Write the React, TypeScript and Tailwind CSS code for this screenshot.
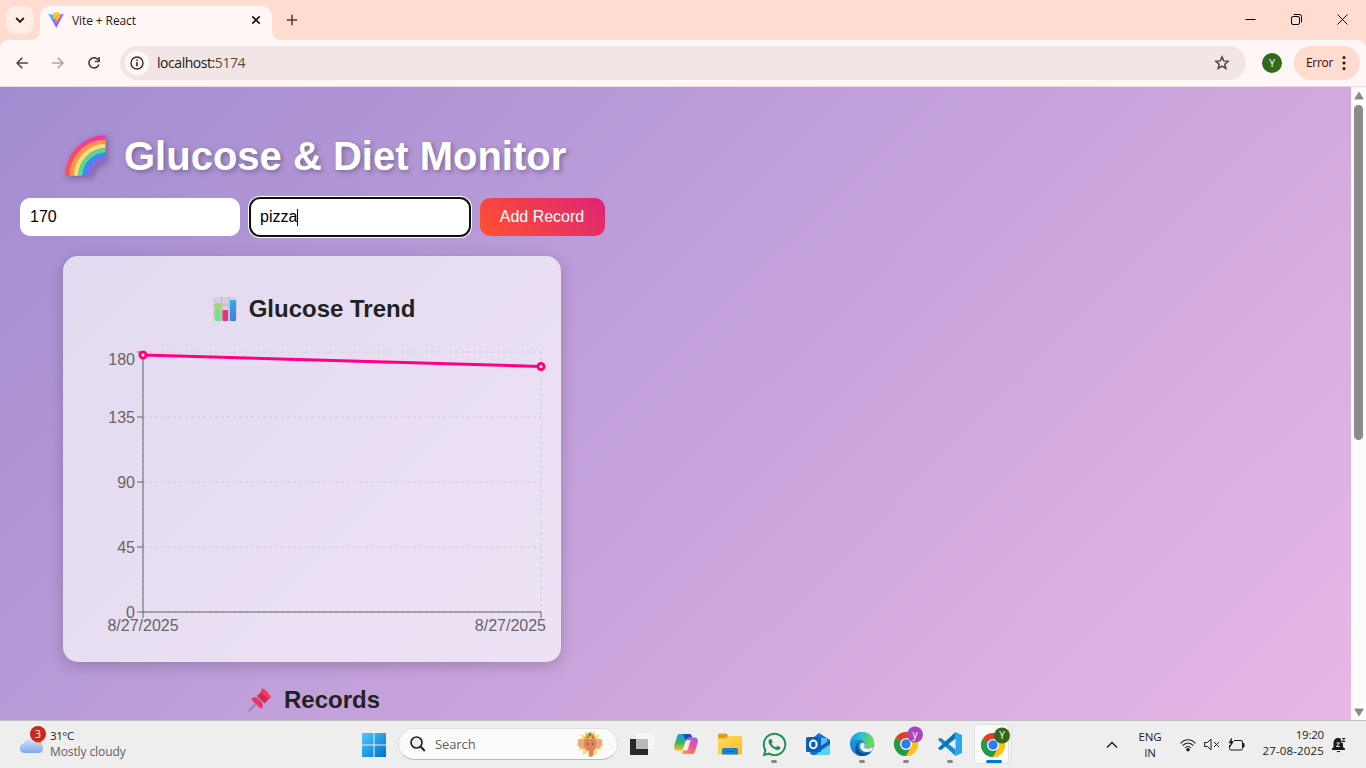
import React from 'react';
import { FaWhatsapp } from 'react-icons/fa';

function Vite() {
  return (
    <svg className="h-4 w-4 shrink-0" viewBox="0 0 16 16">
      <defs>
        <linearGradient id="va" x1="0" y1="0" x2=".6" y2="1">
          <stop stopColor="#41d1ff" /><stop offset="1" stopColor="#bd34fe" />
        </linearGradient>
        <linearGradient id="vb" x1="0" y1="0" x2="0" y2="1">
          <stop stopColor="#ffcf3a" /><stop offset="1" stopColor="#ffa800" />
        </linearGradient>
      </defs>
      <path d="M0 1.7 8 3l8-1.3L8.3 15.8z" fill="url(#va)" />
      <path d="M5.6.6 11.8 0 10.600 3.800l2.200-.4-5.500 8 .6-4.800-2.700.5z" fill="url(#vb)" />
    </svg>
  );
}

function TabStrip() {
  return (
    <div className="flex h-10 shrink-0 bg-[#ffdbd0]">
      <div className="ml-1.5 mt-1.5 flex h-7 w-7 items-center justify-center rounded-[10px] bg-[#ffede8]">
        <svg width="10" height="8" viewBox="0 0 10 8" fill="none" stroke="#2a1714" strokeWidth="1.9"><path d="m1.2 2 3.8 3.8L8.800 2" /></svg>
      </div>
      <div className="flex w-[6px] items-end">
        <svg className="-ml-[4px] w-[10px] shrink-0" height="10" viewBox="0 0 10 10"><path d="M10 0v10H0Q10 10 10 0" fill="#fff7f5" /></svg>
      </div>
      <div className="mt-1.5 flex w-[232px] items-center rounded-t-[10px] bg-[#fff7f5] pb-1.5 pl-2 pr-[11px]">
        <Vite />
        <span className="ml-2 grow whitespace-nowrap pt-px text-[12px] tracking-[-0.1px] text-[#231917]">Vite + React</span>
        <svg width="10" height="10" viewBox="0 0 10 10" stroke="#231917" strokeWidth="1.7"><path d="m1.300 1.300 7.400 7.400m0-7.400L1.300 8.700" /></svg>
      </div>
      <div className="flex w-[14px] items-end">
        <svg width="10" height="10" viewBox="0 0 10 10"><path d="M0 0v10h10Q0 10 0 0" fill="#fff7f5" /></svg>
      </div>
      <svg className="mt-[14px]" width="12" height="12" viewBox="0 0 12 12" stroke="#5d4037" strokeWidth="1.600"><path d="M6 .8v10.400M.8 6h10.400" /></svg>
      <div className="ml-auto flex items-start gap-[35px] pr-[18px] pt-[14px]">
        <svg width="11" height="11" viewBox="0 0 11 11" stroke="#000"><path d="M.5 5.500h10" /></svg>
        <svg width="11" height="11" viewBox="0 0 11 11" fill="none" stroke="#000"><rect x=".5" y="2.500" width="8" height="8" rx="1.500" /><path d="M2.700.5H8.500a2 2 0 0 1 2 2v5.800" /></svg>
        <svg width="11" height="11" viewBox="0 0 11 11" stroke="#000"><path d="m.5.5 10 10m0-10-10 10" /></svg>
      </div>
    </div>
  );
}

function Toolbar() {
  return (
    <div className="h-[47px] shrink-0 bg-[#ffdbd0]">
      <div className="flex h-[47px] items-start rounded-t-[8px] border-b border-[#f0dcd6] bg-[#fff7f5] pt-1.5">
        <div className="flex h-[34px] w-[120px] items-center pl-4">
          <svg width="12" height="12" viewBox="0 0 12 12" fill="none" stroke="#5d4037" strokeWidth="1.600"><path d="M12 6H1.200M6.300.8 1.100 6l5.200 5.200" /></svg>
          <svg className="ml-6" width="12" height="12" viewBox="0 0 12 12" fill="none" stroke="#b3a4a0" strokeWidth="1.600"><path d="M0 6h10.800M5.700.8 10.900 6l-5.200 5.200" /></svg>
          <svg className="ml-6" width="12" height="12" viewBox="0 0 12 12" fill="none" stroke="#5d4037" strokeWidth="1.700"><path d="M10.900 7.500A5.100 5.100 0 1 1 10 2.600l1 1.300" /><path d="M11.100 0v4.500H6.600" /></svg>
        </div>
        <div className="flex h-[34px] w-[1126px] items-center rounded-full bg-[#f1e6e5] pl-[5px] pr-[16px]">
          <div className="flex h-6 w-6 items-center justify-center rounded-full bg-[#fff7f5]">
            <svg width="14" height="14" viewBox="0 0 14 14" fill="none" stroke="#3b2d2a" strokeWidth="1.400"><circle cx="7" cy="7" r="6" /><path d="M7 6v4.300M7 3.500V5" strokeWidth="1.600" /></svg>
          </div>
          <span className="ml-[8px] grow pb-px text-[14px] tracking-[-0.450px] text-[#231917]">localhost:<span className="text-[#5b4a46]">5174</span></span>
          <svg width="16" height="16" viewBox="0 0 16 16" fill="none" stroke="#53433f" strokeWidth="1.500"><path d="m8 1.900 1.700 4 4.400.4-3.300 2.900 1 4.300L8 11.200l-3.800 2.300 1-4.300L1.900 6.300l4.400-.4z" /></svg>
        </div>
        <div className="ml-4 mt-[7px] flex h-5 w-5 items-center justify-center rounded-full bg-[#33691e] text-[11px] text-white">Y</div>
        <div className="ml-3 flex h-[34px] w-[66px] items-center rounded-full bg-[#ffdbd0] pl-3 text-[12px] text-[#3b0900]">
          <span className="w-[36px] tracking-[-0.300px]">Error</span>
          <svg width="4" height="16" viewBox="0 0 4 16" fill="#3b0900"><circle cx="2" cy="2.500" r="1.500" /><circle cx="2" cy="8" r="1.500" /><circle cx="2" cy="13.500" r="1.500" /></svg>
        </div>
      </div>
    </div>
  );
}

function Rainbow() {
  const bands = ['#f8387f', '#ff9545', '#ffdc75', '#55d896', '#3b8bf7', '#8f68dc'];
  return (
    <svg className="h-[42px] w-[42px] drop-shadow-[2px_2px_3px_rgba(0,0,0,0.3)]" viewBox="0 0 42 42">
      <defs>
        <linearGradient id="ra" x1="0" y1="1" x2="1" y2="0"><stop stopColor="#ff5252" /><stop offset="1" stopColor="#f72fb0" /></linearGradient>
      </defs>
      {bands.map((c, i) => (
        <path key={c} fill="none" stroke={i === 0 ? 'url(#ra)' : c} strokeWidth="4.500" d={`M${2.500 + i * 4.3} 40.800C${2.500 + i * 4.3} ${19.500 + i * 2.6} ${19.500 + i * 2.6} ${2.500 + i * 4.3} 40.500 ${2.500 + i * 4.3}`} />
      ))}
    </svg>
  );
}

function ChartEmoji() {
  return (
    <svg width="24" height="24" viewBox="0 0 24 24">
      <defs>
        <linearGradient id="cg" x1="0" y1="0" x2="0" y2="1"><stop stopColor="#a5dc55" /><stop offset="1" stopColor="#5be88e" /></linearGradient>
        <linearGradient id="cb" x1="0" y1="0" x2="0" y2="1"><stop stopColor="#35a9f5" /><stop offset="1" stopColor="#3f7fd0" /></linearGradient>
      </defs>
      <rect width="24" height="24" rx="3" fill="#d4cfdb" />
      <path d="M8.500 0v24M16 0v24M0 8h24M0 16h24" stroke="#bbb6c3" strokeWidth="1" />
      <rect x="2" y="6" width="5.500" height="18" rx="1" fill="url(#cg)" />
      <rect x="9.500" y="13" width="5.500" height="11" rx="1" fill="#e5337a" />
      <rect x="17" y="3" width="6" height="21" rx="1" fill="url(#cb)" />
    </svg>
  );
}

function Pin() {
  return (
    <svg width="24" height="24" viewBox="0 0 24 24">
      <path d="M1 23 9.500 14" stroke="#8d8792" strokeWidth="1.800" />
      <path d="m9 8 5-5 7.500 7.500-5 5z" fill="#c92c55" />
      <path d="M14 .7c1.500-1.200 9.500 6.800 8.700 9-.8 1.500-2.700 1.300-3.700.5L14 5c-1-1.200-1.200-3 0-4.300" fill="#fb3560" />
      <path d="M3.500 10.500c2-1.800 5-1.700 7.500.7l1.700 1.800c2.200 2.200 2.700 5 1.500 6.700-1.500 1.800-3.200-.5-5.200-2.700-1.800-2-6-4.500-5.500-6.500" fill="#f0326c" />
    </svg>
  );
}

function TrendChart() {
  const ticks: [string, number][] = [['180', 352], ['135', 417], ['90', 482], ['45', 547], ['0', 612]];
  return (
    <svg className="block h-[300px] w-[498px] font-['Liberation_Sans',sans-serif] text-[16px]" viewBox="63 345 498 300">
      <g stroke="#ccc" strokeDasharray="3 3">
        {ticks.map(([t, y]) => <path key={t} d={`M143 ${y}H541`} />)}
        <path d="M143 352v260M541 352v260" />
      </g>
      <g stroke="#666">
        <path d="M143 352v260M143 612h398M143 612v6M541 612v6" />
        {ticks.map(([t, y]) => <path key={t} d={`M137 ${y}h6`} />)}
      </g>
      <g fill="#666">
        {ticks.map(([t, y]) => <text key={t} x="135" y={t === '180' ? 365 : y + 6} textAnchor="end">{t}</text>)}
        <text x="143" y="631" textAnchor="middle">8/27/2025</text>
        <text x="546" y="631" textAnchor="end">8/27/2025</text>
      </g>
      <path d="M143 355 541 366.500" stroke="#ff0080" strokeWidth="3" />
      <g fill="#fff" stroke="#ff0080" strokeWidth="3"><circle cx="143" cy="355" r="3" /><circle cx="541" cy="366.500" r="3" /></g>
    </svg>
  );
}

function Page() {
  return (
    <div className="h-full grow overflow-hidden">
      <div className="h-[1140px] bg-[linear-gradient(135deg,#a18cd1,#fbc2eb)] pl-5 pt-[44px] font-['Liberation_Sans',Arial,sans-serif] text-[#222]">
        <div className="flex h-[50px] items-center pl-[45px]">
          <Rainbow />
          <h1 className="ml-[17px] whitespace-nowrap text-[40px] font-bold leading-[50px] text-white [text-shadow:2px_2px_5px_rgba(0,0,0,0.300)]">Glucose &amp; Diet Monitor</h1>
        </div>
        <div className="mt-[17px] flex h-[38px] gap-[10px] text-[16px]">
          <div className="flex w-[220px] items-center rounded-[10px] bg-white px-[10px] text-black">170</div>
          <div className="flex w-[220px] items-center rounded-[10px] bg-white px-[10px] text-black outline-2 outline-[#101010] ring-2 ring-white outline-offset-[-1px]">pizza<span className="h-[17px] w-px bg-black" /></div>
          <button className="w-[125px] rounded-[10px] bg-[linear-gradient(45deg,#ff512f,#dd2476)] pr-px text-white">Add Record</button>
        </div>
        <div className="ml-[43px] mt-5 h-[406px] w-[498px] rounded-[15px] bg-white/67 pt-[39px] shadow-[0_4px_15px_rgba(0,0,0,0.200)]">
          <div className="flex h-7 items-center justify-center gap-[12px] pl-[4px] text-[24px] font-bold">
            <ChartEmoji /><h2>Glucose Trend</h2>
          </div>
          <div className="pt-[22px]"><TrendChart /></div>
        </div>
        <div className="mt-6 flex h-7 w-[588px] items-center justify-center gap-[12px] text-[24px] font-bold">
          <Pin /><h2>Records</h2>
        </div>
      </div>
    </div>
  );
}

function Scrollbar() {
  return (
    <div className="flex h-full w-[15px] shrink-0 flex-col items-center bg-[#fcfcfc] pt-[4px]">
      <svg width="10" height="9" viewBox="0 0 10 9" fill="#8b8b8b"><path d="M5 .5 9.500 7.500Q9.500 8.500 8.500 8.500h-7Q.5 8.500.5 7.500z" /></svg>
      <div className="mt-[5px] h-[335px] w-[9px] rounded-full bg-[#8b8b8b]" />
      <svg className="mb-[3px] mt-auto" width="10" height="9" viewBox="0 0 10 9" fill="#8b8b8b"><path d="M5 8.500.5 1.500Q.5.500 1.500.5h7q1 0 1 1z" /></svg>
    </div>
  );
}

function Chrome({ letter, color }: { letter: string; color: string }) {
  return (
    <svg className="block h-[30px] w-[30px]" viewBox="0 0 30 30">
      <circle cx="12" cy="18" r="12" fill="#fbc116" />
      <path d="M12 18 1.600 12A12 12 0 0 1 22.400 12z" fill="#e33b2e" />
      <path d="M12 18 1.600 12A12 12 0 0 0 12 30l5-9z" fill="#229a48" />
      <path d="M12 12h10.400A12 12 0 0 1 12 30l5.200-9z" fill="#fbc116" />
      <circle cx="12" cy="18" r="6" fill="#fff" /><circle cx="12" cy="18" r="4.700" fill="#2f7cf0" />
      <circle cx="21" cy="8.500" r="8" fill={color} />
      <text x="21" y="12" textAnchor="middle" fontSize="10" fill="#fff">{letter}</text>
    </svg>
  );
}

function Defs() {
  return (
    <defs>
      <linearGradient id="win" x1="0" y1="0" x2="1" y2="1"><stop stopColor="#4cc9fb" /><stop offset="1" stopColor="#0070d0" /></linearGradient>
      <linearGradient id="fold" x1="0" y1="0" x2="1" y2="1"><stop stopColor="#ffdc6a" /><stop offset="1" stopColor="#fbb91c" /></linearGradient>
      <linearGradient id="cp1" x1="0" y1="0" x2="0" y2="1"><stop stopColor="#179de5" /><stop offset=".5" stopColor="#2fb56d" /><stop offset="1" stopColor="#f5c513" /></linearGradient>
      <linearGradient id="cp2" x1=".7" y1="0" x2=".2" y2="1"><stop stopColor="#a85be8" /><stop offset=".5" stopColor="#f0568d" /><stop offset="1" stopColor="#ff9651" /></linearGradient>
      <linearGradient id="ed1" x1="0" y1="0" x2="1" y2=".3"><stop stopColor="#1589df" /><stop offset=".5" stopColor="#32c1cf" /><stop offset="1" stopColor="#6bdd4d" /></linearGradient>
      <linearGradient id="ed2" x1="0" y1="0" x2="1" y2="1"><stop stopColor="#1fa6e5" /><stop offset="1" stopColor="#0c61b8" /></linearGradient>
      <linearGradient id="cl" x1="0" y1="0" x2="0" y2="1"><stop stopColor="#d5e3fa" /><stop offset="1" stopColor="#83a9e8" /></linearGradient>
    </defs>
  );
}

function Ganesha() {
  return (
    <svg width="30" height="28" viewBox="0 0 30 28">
      <path d="m15 1 1.500 4L20 1l0 5 5-2-3 5 6 0-5 4 7 2-7 1 5 5-6-2 0 6-5-3-2 3-2-3-5 3 0-6-6 2 5-5-7-1 7-2-5-4h6L5 4l5 2V1l3.500 4z" fill="#f8dc6a" />
      <path d="M10 10C5 7 1.500 10 3 15c1 4 6 5 8 2zM20 10c5-3 8.500 0 7 5-1 4-6 5-8 2z" fill="#eba986" />
      <path d="M9.500 9h11c2 6 0 10-2 11.500v4c-.5 3.500-5 3-5 0l1-3c-4-1-7-5-5-12.500" fill="#dc8660" />
      <path d="M9 9.500c1-4 4-7 6-7.500s5 3.500 6 7.500c-4-2-8-2-12 0" fill="#dda947" />
      <path d="m15 3 1.500 2L15 6.500 13.500 5z" fill="#3d75c9" />
      <path d="M12 7.500h1.500M17 7.500h1.500" stroke="#c43535" strokeWidth="1.500" />
      <circle cx="12.500" cy="14" r=".7" fill="#53261a" /><circle cx="17.500" cy="14" r=".7" fill="#53261a" />
      <path d="M14.500 18h3M15 21h2.500" stroke="#c4704e" strokeWidth=".6" />
    </svg>
  );
}

function Slot({ children, dot }: { children: React.ReactNode; dot?: boolean }) {
  return (
    <div className="flex h-[47px] w-11 flex-col items-center pt-[4px]">
      <div className="flex h-[38px] items-center justify-center">{children}</div>
      {dot && <div className="-mt-[3px] h-[3px] w-1.5 rounded-full bg-[#868686]" />}
    </div>
  );
}

function Taskbar() {
  return (
    <div className="flex h-12 shrink-0 border-t border-[#c3bdc4] bg-[#eee] text-[12px] text-[#1b1b1b]">
      <div className="flex w-[351px] pl-[18px]">
        <svg className="mt-[4px]" width="30" height="30" viewBox="0 0 30 30">
          <Defs />
          <circle cx="18" cy="17" r="5" fill="#f58220" />
          <path d="M6 28a5 5 0 0 1-.3-9.800C7 13.500 14 11.500 18 18c4-1 7.500 1.500 7 5.500-.2 3-2 4.500-4.500 4.500z" fill="url(#cl)" />
          <circle cx="20" cy="9" r="8" fill="#c42b1c" />
          <text x="20" y="13" textAnchor="middle" fontSize="11" fill="#fff">3</text>
        </svg>
        <div className="ml-[2px] pt-[7px] leading-4">
          <div className="text-[11.500px] tracking-[-0.400px]">31°C</div>
          <div className="text-[12px] tracking-[-0.100px] text-[#606060]">Mostly cloudy</div>
        </div>
      </div>
      <Slot>
        <svg className="ml-px mt-px" width="24" height="24" viewBox="0 0 24 24" fill="url(#win)"><path d="M0 0h11.500v11.500H0zM12.500 0H24v11.500H12.500zM0 12.500h11.500V24H0zM12.500 12.500H24V24H12.500z" /></svg>
      </Slot>
      <div className="ml-[3px] mt-[7px] flex h-8 w-[220px] items-center rounded-full border border-[#dedede] border-b-[#bcbcbc] bg-[#fbfbfb] pl-[11px] pr-[12px]">
        <svg width="16" height="16" viewBox="0 0 16 16" fill="none" stroke="#252525" strokeWidth="1.700"><circle cx="6.500" cy="6.500" r="5.500" fill="#eee" /><path d="m10.500 10.500 4.300 4.500" strokeWidth="2" /></svg>
        <span className="ml-[9px] grow pt-px text-[13px] tracking-[-0.100px] text-[#606060]">Search</span>
        <Ganesha />
      </div>
      <div className="flex pl-[2px]">
        <Slot>
          <svg width="24" height="24" viewBox="0 0 24 24"><path d="M0 7h18v16H0z" fill="#292929" /><path d="M6 1h18v16H6z" fill="#f6f6f6" /><path d="M6 7h12v10H6z" fill="#b9b9b9" /></svg>
        </Slot>
        <Slot>
          <svg width="24" height="24" viewBox="0 0 24 24">
            <path d="M6 2h10L12.500 15c-.8 3-2 3.500-4 3.500H3C0 18.500-.3 15 .7 12L3 4.500C3.700 2.500 4.500 2 6 2" fill="url(#cp1)" />
            <path d="M18 22H8l3.500-13c.8-3 2-3.500 4-3.500H21c3 0 3.300 3.500 2.300 6.500L21 19.500c-.7 2-1.500 2.500-3 2.500" fill="url(#cp2)" />
            <path d="M9 2h6.500c2 0 2.300 2 3 3.500h-3c-2 0-3 .5-3.700 3.500z" fill="#174fc2" />
            <path d="m11.500 9-2.300 7.500c-.4 1.300-1 2-2.500 2h5.500c1 0 1.500-.7 1.800-1.800L16 10c.3-1 .8-1.700 2-1.700h-5.200c-.7 0-1.100.2-1.300.7" fill="#f6edf2" />
          </svg>
        </Slot>
        <Slot>
          <svg width="24" height="24" viewBox="0 0 24 24"><path d="M0 3q0-1.500 1.500-1.500H8Q9.500 1.500 10 4V8H0z" fill="#d9a21b" /><path d="M0 6.500h8l2-2.500h12.500Q24 4 24 5.500v17H0z" fill="url(#fold)" /><path d="M4 22.500V18q0-2 2-2h12q2 0 2 2v4.500z" fill="#1684d2" /><path d="M8 19.500h8" stroke="#0b62a6" /></svg>
        </Slot>
        <Slot dot><FaWhatsapp size={27} color="#1e8e57" /></Slot>
        <Slot>
          <svg width="25" height="24" viewBox="0 0 25 24">
            <path d="m4 8 9-7 11 7v12q0 3-3 3H7q-3 0-3-3z" fill="#1174cf" /><path d="M12 6h9v9h-9z" fill="#56bdf0" /><path d="m24 8-12 8v7h9q3 0 3-3z" fill="#35c4ef" /><path d="m24 8-9 6v4l9-6z" fill="#1558a6" /><path d="m9 23 15-9v6q0 3-3 3z" fill="#55d3f7" />
            <rect y="5" width="15" height="15" rx="1.500" fill="#0b62be" /><ellipse cx="7.300" cy="12.400" rx="3.300" ry="3.800" fill="none" stroke="#fff" strokeWidth="2" />
          </svg>
        </Slot>
        <Slot dot>
          <svg width="24" height="24" viewBox="0 0 24 24">
            <circle cx="12" cy="12" r="12" fill="url(#ed2)" />
            <path d="M0 11C1 4 6 0 12 0c7 0 12 5 12 10.500 0 4-3 6-6.500 6-3 0-4-1.200-3-2.500C16 11 13 7.500 9 7.500 4.500 7.500 1 9 0 11" fill="url(#ed1)" />
            <path d="M9 10c-3.500 5 0 12 7 11.700 2.500 0 4.500-1 6-2.700C19 23 15 24.300 11 24 5 23 3 15 9 10" fill="#124c91" />
            <path d="M14.500 14c-1 1.300 0 2.500 3 2.500 2.300 0 4.700-.9 5.900-2.800L22 18.700c-5 3-12 1-12-4.700 0-2 1.300-3.500 3-3.500 1.700 1.200 2.300 2.300 1.500 3.500" fill="#eee" />
          </svg>
        </Slot>
        <Slot dot><div className="-mt-[6px] pl-[6px]"><Chrome letter="y" color="#ab47bc" /></div></Slot>
        <Slot dot>
          <svg width="24" height="24" viewBox="0 0 24 24"><path d="M17.500 0v24L24 21V3z" fill="#2aa7f2" /><path d="M1.500 6 0 7.800 17.500 24v-6.500L3 6z" fill="#168bd2" /><path d="M17.500 0v6.500L3 18l-1.500-.2L0 16.200z" fill="#0872b9" /></svg>
        </Slot>
        <div className="ml-[2px] mt-[3px] flex h-[40px] w-[38px] rounded-[5px] border border-[#e0e0e0] bg-[#f2f2f2]">
          <div className="flex h-[38px] w-[34px] flex-col items-center rounded-[4px] border-r border-[#e0e0e0] bg-[#fafafa]">
            <div className="ml-[9px] mt-[2px] w-[30px]"><Chrome letter="Y" color="#33691e" /></div>
            <div className="ml-[4px] mt-[3px] h-[3px] w-4 shrink-0 rounded-full bg-[#0078d4]" />
          </div>
        </div>
      </div>
      <div className="ml-auto flex items-center pr-[20px]">
        <svg width="12" height="8" viewBox="0 0 12 8" fill="none" stroke="#1b1b1b" strokeWidth="1.400"><path d="m1 6.500 5-5 5 5" /></svg>
        <div className="ml-[20px] w-6 text-center text-[11.500px] leading-4 tracking-[-0.200px]">ENG<br />IN</div>
        <svg className="ml-[18px]" width="16" height="14" viewBox="0 0 16 14" fill="none" stroke="#1b1b1b" strokeWidth="1.100"><path d="M.5 5.500C4.500.5 11.500.5 15.500 5.500M2.700 7.700c3-3.600 7.600-3.600 10.600 0M5 10c1.700-2.100 4.300-2.100 6 0" /><circle cx="8" cy="11.700" r="1.200" fill="#1b1b1b" /></svg>
        <svg className="ml-[8px]" width="16" height="13" viewBox="0 0 16 13" fill="none" stroke="#1b1b1b" strokeWidth="1"><path d="M.6 4.500h2.700L7 1.200v10.600L3.300 8.500H.6zM10 4l5 5m0-5-5 5" /></svg>
        <svg className="ml-[8px]" width="17" height="14" viewBox="0 0 17 14" fill="none" stroke="#1b1b1b" strokeWidth="1"><path d="M6 2.500h7q1.500 0 1.500 1.500v6.500q0 1.500-1.500 1.500H3q-1.500 0-1.500-1.500V7" /><path d="M15 5.500v3.500h1V5.500z" fill="#1b1b1b" /><path d="M3.500 0 1 5h2L2 9l3.500-5.500h-2z" fill="#1b1b1b" strokeWidth=".5" /></svg>
        <div className="ml-[16px] w-[63px] whitespace-nowrap text-right text-[11.500px] leading-4"><div className="-mt-[3px] tracking-[-0.200px]">19:20</div><div className="-ml-2 tracking-[0.150px]">27-08-2025</div></div>
        <svg className="ml-[8px]" width="14" height="16" viewBox="0 0 14 16"><path d="M0 13v-1.500L1.500 10V6c0-3 2-5 4.700-5S11 3 11 6v4l2 1.500V13zM4.500 14h4q-2 2.500-4 0" fill="#1b1b1b" /><path d="M8.500 0H14v6H9.500z" fill="#eee" /><path d="M10 1.500h3L10 4.500h3.300" fill="none" stroke="#1b1b1b" /><path d="M4.500 6h3L4.500 9.500h3.300" fill="none" stroke="#eee" /></svg>
      </div>
    </div>
  );
}

export default function App() {
  return (
    <div className="flex h-[768px] w-[1366px] flex-col overflow-hidden font-['Open_Sans','Noto_Sans',sans-serif]">
      <TabStrip />
      <Toolbar />
      <div className="flex h-[633px] shrink-0">
        <Page />
        <Scrollbar />
      </div>
      <Taskbar />
    </div>
  );
}
